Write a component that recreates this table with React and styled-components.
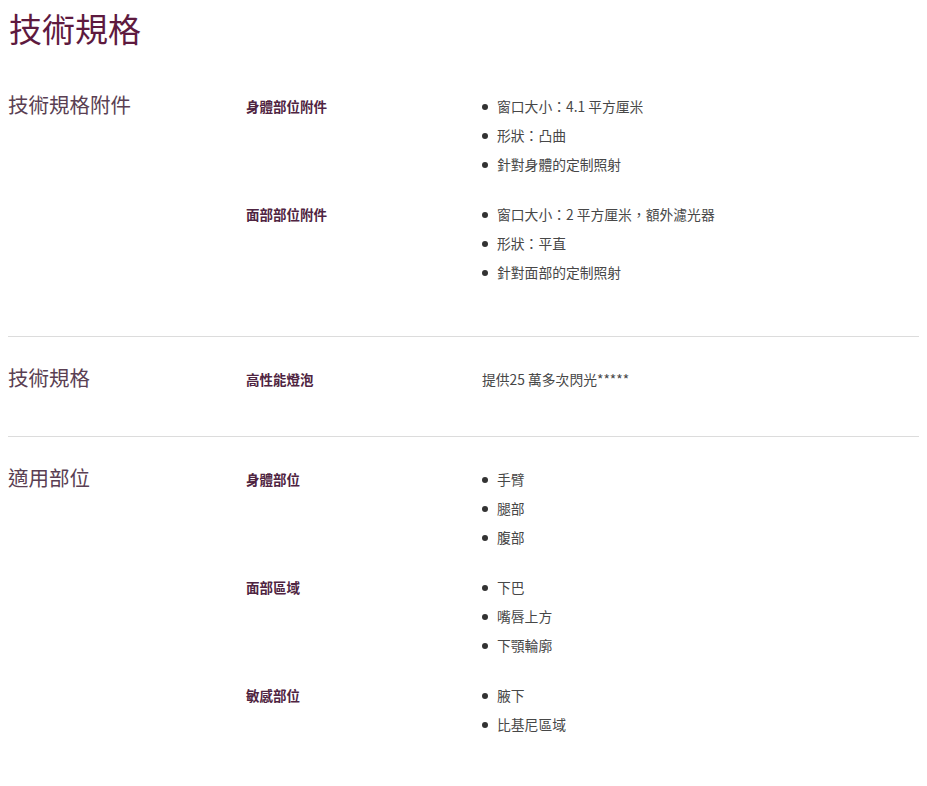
import React from 'react';
import styled, { createGlobalStyle } from 'styled-components';

const specs = [
  {
    title: '技術規格附件',
    groups: [
      { label: '身體部位附件', items: ['窗口大小：4.1 平方厘米', '形狀：凸曲', '針對身體的定制照射'] },
      { label: '面部部位附件', items: ['窗口大小：2 平方厘米，額外濾光器', '形狀：平直', '針對面部的定制照射'] },
    ],
  },
  {
    title: '技術規格',
    groups: [{ label: '高性能燈泡', text: '提供25 萬多次閃光*****' }],
  },
  {
    title: '適用部位',
    groups: [
      { label: '身體部位', items: ['手臂', '腿部', '腹部'] },
      { label: '面部區域', items: ['下巴', '嘴唇上方', '下顎輪廓'] },
      { label: '敏感部位', items: ['腋下', '比基尼區域'] },
    ],
  },
];

const App = () => {
  return (
    <>
      <GlobalStyle />
      <Page>
        <Heading>技術規格</Heading>
        {specs.map((section, i) => (
          <Section key={section.title} $first={i === 0}>
            <SectionTitle>{section.title}</SectionTitle>
            <Groups>
              {section.groups.map(group => (
                <Group key={group.label} $plain={!group.items}>
                  <Label>{group.label}</Label>
                  {group.items ? (
                    <List>
                      {group.items.map(item => (
                        <Item key={item}>{item}</Item>
                      ))}
                    </List>
                  ) : (
                    <Value>{group.text}</Value>
                  )}
                </Group>
              ))}
            </Groups>
          </Section>
        ))}
      </Page>
    </>
  );
};

const GlobalStyle = createGlobalStyle`
  body {
    margin: 0;
    background: #fff;
    font-family: "Noto Sans CJK TC", "Noto Sans", sans-serif;
  }
`;

const Page = styled.main`
  padding: 0 8px;
`;

const Heading = styled.h1`
  margin: 8px 0 0 1px;
  font-size: 33px;
  line-height: 40px;
  font-weight: 400;
  color: #5e1a3f;
`;

const Section = styled.section`
  display: grid;
  grid-template-columns: 238px 1fr;
  padding: ${props => (props.$first ? '44px' : '28px')} 0 28px;
  border-bottom: 1px solid #dcdcdc;
  &:last-child {
    border-bottom: none;
    padding-bottom: 0;
  }
`;

const SectionTitle = styled.h2`
  margin: 0;
  font-size: 20.5px;
  line-height: 25px;
  font-weight: 400;
  color: #5a3f53;
`;

const Groups = styled.div`
  display: flex;
  flex-direction: column;
`;

const Group = styled.div`
  display: grid;
  grid-template-columns: 236px 1fr;
  margin-bottom: ${props => (props.$plain ? '14px' : '21px')};
`;

const Label = styled.div`
  font-size: 13.5px;
  line-height: 29px;
  font-weight: 700;
  color: #4f2441;
`;

const List = styled.ul`
  margin: 0;
  padding: 0;
  list-style: none;
`;

const Item = styled.li`
  position: relative;
  padding-left: 15px;
  font-size: 13.8px;
  line-height: 29px;
  color: #474747;
  &::before {
    content: '';
    position: absolute;
    left: 0;
    top: 12px;
    width: 6px;
    height: 6px;
    border-radius: 50%;
    background: #333;
  }
`;

const Value = styled.p`
  margin: 0;
  font-size: 13.8px;
  line-height: 29px;
  color: #474747;
`;

export default App;
